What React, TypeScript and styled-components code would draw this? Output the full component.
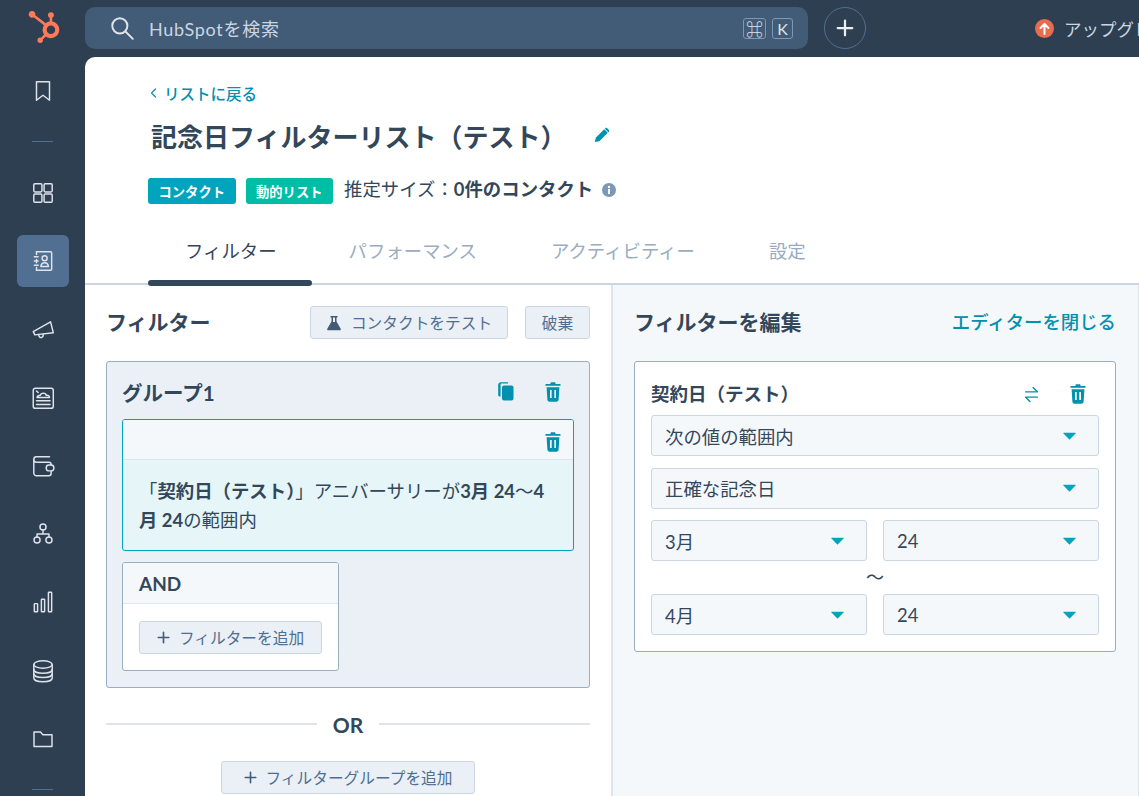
import styled, { createGlobalStyle } from "styled-components";
import { SiHubspot } from "react-icons/si";
import type { ReactNode } from "react";

const GlobalStyle = createGlobalStyle`
  html, body {
    margin: 0;
    padding: 0;
    height: 100%;
    overflow: hidden;
    background: #2e3f52;
  }
  body {
    font-family: Lato, "Noto Sans CJK JP", sans-serif;
    color: #33475b;
  }
  * {
    box-sizing: border-box;
  }
`;

const Line = ({ size = 26, children }: { size?: number; children: ReactNode }) => (
  <svg width={size} height={size} viewBox="0 0 24 24" fill="none" stroke="currentColor" strokeWidth="1.35" strokeLinecap="round" strokeLinejoin="round">
    {children}
  </svg>
);

const BookmarkIcon = () => (
  <Line>
    <path d="M6 3.500h12v17l-6-4.600-6 4.600z" />
  </Line>
);

const GridIcon = () => (
  <Line>
    <rect x="3.500" y="3.500" width="7.500" height="7.500" rx="1" />
    <rect x="13" y="3.500" width="7.500" height="7.500" rx="1" />
    <rect x="3.500" y="13" width="7.500" height="7.500" rx="1" />
    <rect x="13" y="13" width="7.500" height="7.500" rx="1" />
  </Line>
);

const ContactsIcon = () => (
  <Line>
    <path d="M6 3.500h13a1 1 0 0 1 1 1v15a1 1 0 0 1-1 1H6" />
    <path d="M6 3.500v2.500M6 10.500v3M6 18v2.500M4 8h3.500M4 12h3.500M4 16h3.500" />
    <circle cx="13.500" cy="9.500" r="2.300" />
    <path d="M10 17c.4-2.300 1.800-3.300 3.500-3.300s3.100 1 3.500 3.300z" />
  </Line>
);

const MegaphoneIcon = () => (
  <Line>
    <path d="M3 13.500 19 4.500l2.500 10-17 2z" />
    <path d="M8 16.200c.2 2 1.200 3 2.500 2.800s1.800-1.300 1.700-3" />
  </Line>
);

const ReportIcon = () => (
  <Line>
    <rect x="3" y="3" width="18.500" height="18.500" rx="2" />
    <path d="M6 5.500l1.500 1.500" />
    <path d="M6.500 11.500c.5-2 2-2 3-2 .6-2.500 5-2.500 5.500 0 1.500-.3 3 .5 3 2z" />
    <path d="M6 14.500h12.500M6 18h12.500" />
  </Line>
);

const WalletIcon = () => (
  <Line>
    <path d="M18 3.500H6a2.500 2.500 0 0 0-2.500 2.500v12.500A2.500 2.500 0 0 0 6 21h11.500a2 2 0 0 0 2-2v-2" />
    <path d="M3.500 6.500c0 1.200 1 2 2.500 2h11.500a2 2 0 0 1 2 2V11" />
    <rect x="15" y="11" width="7" height="5.500" rx="2.500" />
  </Line>
);

const NetworkIcon = () => (
  <Line>
    <circle cx="12" cy="5.500" r="2.800" />
    <circle cx="6.500" cy="17.500" r="2.800" />
    <circle cx="17.500" cy="17.500" r="2.800" />
    <path d="M12 8.300v3.700M6.500 14.700V12h11v2.700" />
  </Line>
);

const BarsIcon = () => (
  <Line>
    <rect x="4" y="13.500" width="3" height="7.500" rx=".5" />
    <rect x="10.500" y="9.500" width="3" height="11.500" rx=".5" />
    <rect x="17" y="3" width="3" height="18" rx=".5" />
  </Line>
);

const DatabaseIcon = () => (
  <Line>
    <ellipse cx="12" cy="6" rx="8.500" ry="3.500" />
    <path d="M3.500 6v12.500C3.500 20.500 7 22 12 22s8.500-1.500 8.500-3.500V6" />
    <path d="M3.500 10.500c0 2 3.500 3.500 8.500 3.500s8.500-1.500 8.500-3.500M3.500 14.500c0 2 3.500 3.500 8.500 3.500s8.500-1.500 8.500-3.500" />
  </Line>
);

const FolderIcon = () => (
  <Line>
    <path d="M3.700 5.500h6l2 2.500h8.600v11H3.700z" />
  </Line>
);

const SearchIcon = () => (
  <Line>
    <circle cx="10" cy="10" r="7" />
    <path d="M15.200 15.200 22 22" />
  </Line>
);

const PlusIcon = ({ size = 16 }: { size?: number }) => (
  <svg width={size} height={size} viewBox="0 0 16 16" fill="none" stroke="currentColor" strokeWidth="2" strokeLinecap="round">
    <path d="M8 1.500v13M1.500 8h13" />
  </svg>
);

const TrashIcon = () => (
  <svg width="16" height="20" viewBox="0 0 16 20" fill="currentColor">
    <path d="M5.500 1.200C5.500.6 6 .2 6.600.2h2.800c.6 0 1.100.4 1.100 1V2h4.300c.5 0 .9.400.9.900s-.4.900-.9.900H1.200C.7 3.800.3 3.400.3 2.900S.7 2 1.200 2h4.300z" />
    <path fillRule="evenodd" d="M1.600 5.200h12.800l-.8 12.600c-.1 1.100-1 1.900-2 1.900H4.400c-1 0-1.900-.8-2-1.900zM5 8v8h1.700V8zm4.300 0v8H11V8z" />
  </svg>
);

const CopyIcon = () => (
  <svg width="16" height="19" viewBox="0 0 16 19" fill="currentColor">
    <path d="M2.600 14.500V2.500c0-.6.400-1 1-1h6.500V.2H3C1.300.2.200 1.300.2 3v10c0 1 .9 1.500 2.400 1.500z" />
    <rect x="4" y="3.500" width="11.500" height="15" rx="2" />
  </svg>
);

const FlaskIcon = () => (
  <svg width="16" height="16" viewBox="0 0 16 16" fill="currentColor">
    <path fillRule="evenodd" d="M4.500 1h7v1.500h-1v4l4.200 7.200c.4.800 0 1.500-.9 1.500H2.200c-.9 0-1.300-.7-.9-1.500l4.200-7.200v-4h-1zM7 2.500v4.500h2V2.500z" />
  </svg>
);

const PencilIcon = () => (
  <svg width="16" height="16" viewBox="0 0 18 18" fill="currentColor">
    <path d="M1 17l1-5L11.500 2.500l4 4L6 16z" />
    <path d="M12.800 1.300c.6-.6 1.400-.6 2 0l2 2c.6.6.6 1.400 0 2l-.6.600-4-4z" />
  </svg>
);

const InfoIcon = () => (
  <svg width="14" height="14" viewBox="0 0 14 14">
    <circle cx="7" cy="7" r="7" fill="#7c98b6" />
    <rect x="6" y="6" width="2" height="5" fill="#fff" />
    <circle cx="7" cy="4" r="1.200" fill="#fff" />
  </svg>
);

const SwapIcon = () => (
  <svg width="15" height="17" viewBox="0 0 14 16" fill="none" stroke="currentColor" strokeWidth="1.300" strokeLinecap="round" strokeLinejoin="round">
    <path d="M1.500 5.500h11M8.500 1.500l4 4" />
    <path d="M12.500 10.500h-11M5.500 14.500l-4-4" />
  </svg>
);

const Caret = () => (
  <svg width="13" height="8" viewBox="0 0 14 8" fill="currentColor">
    <path d="M1 .5h12c.6 0 .8.500.5.900L7.500 7.500c-.3.300-.7.300-1 0L.5 1.400C.2 1 .4.500 1 .5z" />
  </svg>
);

const BackChevron = () => (
  <svg width="7" height="10" viewBox="0 0 7 10" fill="none" stroke="currentColor" strokeWidth="1.200" strokeLinecap="round" strokeLinejoin="round">
    <path d="M5.500 1 1.500 5l4 4" />
  </svg>
);

const UpgradeIcon = () => (
  <svg width="19" height="19" viewBox="0 0 19 19">
    <circle cx="9.500" cy="9.500" r="9.500" fill="#e66e50" />
    <path d="M9.500 15V5M5.500 9l4-4 4 4" fill="none" stroke="#fff" strokeWidth="2" strokeLinecap="round" strokeLinejoin="round" />
  </svg>
);

const navTop = [{ icon: <BookmarkIcon /> }];
const navMain = [
  { icon: <GridIcon /> },
  { icon: <ContactsIcon />, active: true },
  { icon: <MegaphoneIcon /> },
  { icon: <ReportIcon /> },
  { icon: <WalletIcon /> },
  { icon: <NetworkIcon /> },
  { icon: <BarsIcon /> },
  { icon: <DatabaseIcon /> },
  { icon: <FolderIcon /> },
];

const tabs = ["フィルター", "パフォーマンス", "アクティビティー", "設定"];

export default function App() {
  return (
    <>
      <GlobalStyle />
      <Shell>
        <LogoCell>
          <SiHubspot size={32} color="#ff7a59" />
        </LogoCell>

        <TopBar>
          <SearchBox>
            <SearchIcon />
            <SearchText>HubSpotを検索</SearchText>
            <Kbd $wide>⌘</Kbd>
            <Kbd>K</Kbd>
          </SearchBox>
          <RoundButton>
            <PlusIcon size={18} />
          </RoundButton>
          <Upgrade>
            <UpgradeIcon />
            アップグレード
          </Upgrade>
        </TopBar>

        <SideNav>
          {navTop.map((item, i) => (
            <NavItem key={i}>{item.icon}</NavItem>
          ))}
          <NavDivider />
          {navMain.map((item, i) => (
            <NavItem key={i}>
              <NavIcon $active={item.active}>{item.icon}</NavIcon>
            </NavItem>
          ))}
          <NavDivider />
        </SideNav>

        <Content>
          <Header>
            <BackLink>
              <BackChevron />
              リストに戻る
            </BackLink>
            <TitleRow>
              <Title>記念日フィルターリスト（テスト）</Title>
              <TealIcon>
                <PencilIcon />
              </TealIcon>
            </TitleRow>
            <MetaRow>
              <Tag $color="#00a4bd">コンタクト</Tag>
              <Tag $color="#00bda5">動的リスト</Tag>
              <Estimate>
                推定サイズ：<b>0件のコンタクト</b>
              </Estimate>
              <InfoMark>
                <InfoIcon />
              </InfoMark>
            </MetaRow>
            <TabRow>
              {tabs.map((tab, i) => (
                <Tab key={tab} $active={i === 0}>
                  {tab}
                </Tab>
              ))}
            </TabRow>
          </Header>

          <Columns>
            <LeftPane>
              <PaneHead>
                <PaneTitle>フィルター</PaneTitle>
                <HeadActions>
                  <GhostButton $width={198}>
                    <FlaskIcon />
                    コンタクトをテスト
                  </GhostButton>
                  <GhostButton $width={65}>破棄</GhostButton>
                </HeadActions>
              </PaneHead>

              <Group>
                <GroupHead>
                  <GroupTitle>グループ1</GroupTitle>
                  <IconActions>
                    <TealIcon>
                      <CopyIcon />
                    </TealIcon>
                    <TealIcon>
                      <TrashIcon />
                    </TealIcon>
                  </IconActions>
                </GroupHead>

                <FilterCard>
                  <FilterCardHead>
                    <TealIcon>
                      <TrashIcon />
                    </TealIcon>
                  </FilterCardHead>
                  <FilterCardBody>
                    「<b>契約日（テスト）</b>」アニバーサリーが<b>3月 24</b>〜<b>4月 24</b>の範囲内
                  </FilterCardBody>
                </FilterCard>

                <AndCard>
                  <AndHead>AND</AndHead>
                  <AndBody>
                    <GhostButton $width={183}>
                      <PlusIcon size={13} />
                      フィルターを追加
                    </GhostButton>
                  </AndBody>
                </AndCard>
              </Group>

              <OrRow>OR</OrRow>

              <AddGroupRow>
                <GhostButton $width={254}>
                  <PlusIcon size={13} />
                  フィルターグループを追加
                </GhostButton>
              </AddGroupRow>
            </LeftPane>

            <RightPane>
              <PaneHead>
                <PaneTitle>フィルターを編集</PaneTitle>
                <CloseLink>エディターを閉じる</CloseLink>
              </PaneHead>

              <EditCard>
                <EditHead>
                  <EditTitle>契約日（テスト）</EditTitle>
                  <IconActions>
                    <TealIcon>
                      <SwapIcon />
                    </TealIcon>
                    <TealIcon>
                      <TrashIcon />
                    </TealIcon>
                  </IconActions>
                </EditHead>
                <FieldStack>
                  <Select>
                    次の値の範囲内
                    <Caret />
                  </Select>
                  <Select>
                    正確な記念日
                    <Caret />
                  </Select>
                  <DateRow>
                    <Select>
                      3月
                      <Caret />
                    </Select>
                    <Select>
                      24
                      <Caret />
                    </Select>
                  </DateRow>
                </FieldStack>
                <Tilde>〜</Tilde>
                <DateRow>
                  <Select>
                    4月
                    <Caret />
                  </Select>
                  <Select>
                    24
                    <Caret />
                  </Select>
                </DateRow>
              </EditCard>
            </RightPane>
          </Columns>
        </Content>
      </Shell>
    </>
  );
}

const Shell = styled.div`
  display: grid;
  grid-template-columns: 85px 1fr;
  grid-template-rows: 57px 1fr;
  width: 100%;
  height: 100vh;
  overflow: hidden;
  background: #2e3f52;
`;

const LogoCell = styled.div`
  display: flex;
  align-items: center;
  justify-content: center;
  padding: 0 0 3px 3px;
`;

const TopBar = styled.div`
  display: flex;
  align-items: center;
  gap: 16px;
  padding-bottom: 1px;
  min-width: 0;
  overflow: hidden;
`;

const SearchBox = styled.div`
  display: flex;
  flex: none;
  align-items: center;
  width: 723px;
  height: 42px;
  padding: 0 15px 0 24px;
  background: #425b76;
  border-radius: 10px;
  color: #dfe3eb;

  svg {
    stroke-width: 1.8;
  }
`;

const SearchText = styled.span`
  flex: 1;
  margin-left: 14px;
  font-size: 18px;
  letter-spacing: 0.7px;
  color: #cbd6e2;
`;

const Kbd = styled.span<{ $wide?: boolean }>`
  display: flex;
  align-items: center;
  justify-content: center;
  width: ${(props) => (props.$wide ? "23px" : "21px")};
  height: 21px;
  margin-left: ${(props) => (props.$wide ? "0" : "6px")};
  border: 1px solid #7c98b6;
  border-radius: 3px;
  font-size: ${(props) => (props.$wide ? "17px" : "16px")};
  color: #dfe3eb;
`;

const RoundButton = styled.div`
  display: flex;
  flex: none;
  align-items: center;
  justify-content: center;
  width: 42px;
  height: 42px;
  border: 1px solid #516f90;
  border-radius: 50%;
  color: #eaf0f6;
`;

const Upgrade = styled.div`
  display: flex;
  flex: none;
  align-items: center;
  gap: 10px;
  margin-left: 153px;
  font-size: 17.500px;
  color: #cbd6e2;
  white-space: nowrap;
`;

const SideNav = styled.nav`
  display: flex;
  flex-direction: column;
  align-items: center;
  overflow: hidden;
`;

const NavItem = styled.div`
  display: flex;
  flex: none;
  align-items: center;
  justify-content: center;
  width: 100%;
  height: 68.200px;
  color: #dfe3eb;
`;

const NavIcon = styled.div<{ $active?: boolean }>`
  display: flex;
  align-items: center;
  justify-content: center;
  width: 52px;
  height: 52px;
  border-radius: 6px;
  background: ${(props) => (props.$active ? "#516f90" : "transparent")};
`;

const NavDivider = styled.div`
  flex: none;
  width: 21px;
  height: 1px;
  margin: 16px 0 17px;
  background: #516f90;
`;

const Content = styled.main`
  display: flex;
  flex-direction: column;
  min-width: 0;
  min-height: 0;
  overflow: hidden;
  background: #fff;
  border-top-left-radius: 10px;
`;

const Header = styled.header`
  flex: none;
  padding: 25px 0 0 63px;
  border-bottom: 2px solid #cbd6e2;
`;

const BackLink = styled.a`
  display: flex;
  align-items: center;
  gap: 7px;
  height: 22px;
  margin-left: 2px;
  font-size: 15.500px;
  font-weight: 500;
  color: #0091ae;
`;

const TitleRow = styled.div`
  display: flex;
  align-items: center;
  gap: 28px;
  margin: 13px 0 0 3px;
  height: 36px;
`;

const Title = styled.h1`
  margin: 0;
  font-size: 26px;
  font-weight: 600;
  color: #33475b;
  white-space: nowrap;
`;

const TealIcon = styled.span`
  display: inline-flex;
  align-items: center;
  justify-content: center;
  color: #0091ae;
`;

const MetaRow = styled.div`
  display: flex;
  align-items: center;
  height: 26px;
  margin-top: 25px;
`;

const Tag = styled.span<{ $color: string }>`
  display: flex;
  align-items: center;
  justify-content: center;
  width: 87.500px;
  height: 26px;
  margin-right: 10px;
  border-radius: 3px;
  background: ${(props) => props.$color};
  color: #fff;
  font-size: 13.300px;
  font-weight: 700;
`;

const Estimate = styled.span`
  margin: 0 9px 6px 1px;
  font-size: 18.400px;
  color: #33475b;

  b {
    font-weight: 700;
  }
`;

const InfoMark = styled.span`
  display: flex;
  margin-bottom: 3px;
`;

const TabRow = styled.div`
  display: flex;
  margin-top: 26px;
  height: 55px;
  margin-bottom: -2px;
`;

const Tab = styled.div<{ $active: boolean }>`
  position: relative;
  padding: 7px 37px 0;
  font-size: 18.400px;
  color: ${(props) => (props.$active ? "#33475b" : "#99acc2")};

  &:first-child {
    padding: 7px 35px 0 37px;
  }

  &::after {
    content: "";
    display: ${(props) => (props.$active ? "block" : "none")};
    position: absolute;
    left: 0;
    right: 0;
    bottom: -1px;
    height: 6px;
    border-radius: 3px;
    background: #33475b;
  }
`;

const Columns = styled.div`
  display: grid;
  flex: 1;
  grid-template-columns: 528px 1fr;
  min-height: 0;
`;

const LeftPane = styled.section`
  padding: 21px 21px 0;
  border-right: 2px solid #dfe3eb;
`;

const RightPane = styled.section`
  padding: 21px 22px 0 21px;
  background: #f5f8fa;
  border-right: 1px solid #dfe3eb;
`;

const PaneHead = styled.div`
  display: flex;
  align-items: center;
  justify-content: space-between;
  height: 33px;
  margin-bottom: 22px;
`;

const PaneTitle = styled.h2`
  margin: 0 0 4px;
  font-size: 21px;
  font-weight: 700;
  color: #33475b;
`;

const HeadActions = styled.div`
  display: flex;
  gap: 17px;
`;

const GhostButton = styled.button<{ $width: number }>`
  display: flex;
  align-items: center;
  justify-content: center;
  gap: 9px;
  width: ${(props) => props.$width}px;
  height: 33px;
  padding: 0;
  background: #eaf0f6;
  border: 1px solid #cbd6e2;
  border-radius: 3px;
  font-family: inherit;
  font-size: 15.700px;
  color: #506e91;

  svg {
    color: #425b76;
  }
`;

const Group = styled.div`
  height: 327px;
  padding: 0 15px;
  background: #eaf0f6;
  border: 1px solid #99acc2;
  border-radius: 3px;
`;

const GroupHead = styled.div`
  display: flex;
  align-items: center;
  justify-content: space-between;
  height: 57px;
  padding: 2px 13px 0 0;
`;

const GroupTitle = styled.h3`
  margin: 0;
  font-size: 20.500px;
  font-weight: 700;
  color: #33475b;
`;

const IconActions = styled.div`
  display: flex;
  align-items: center;
  gap: 31px;
`;

const FilterCard = styled.div`
  overflow: hidden;
  background: #e5f5f8;
  border: 1px solid #00a4bd;
  border-radius: 3px;
`;

const FilterCardHead = styled.div`
  display: flex;
  align-items: center;
  justify-content: flex-end;
  height: 40px;
  padding: 4px 12px 0 0;
  background: #f5f8fa;
  border-bottom: 1px solid #dfe3eb;
`;

const FilterCardBody = styled.div`
  padding: 17px 16px 15px;
  font-size: 18.400px;
  line-height: 29px;
  color: #33475b;

  b {
    font-weight: 700;
  }
`;

const AndCard = styled.div`
  width: 217px;
  margin-top: 11px;
  overflow: hidden;
  background: #fff;
  border: 1px solid #99acc2;
  border-radius: 3px;
`;

const AndHead = styled.div`
  display: flex;
  align-items: center;
  height: 41px;
  padding-left: 16px;
  background: #f5f8fa;
  border-bottom: 1px solid #dfe3eb;
  font-size: 19px;
  font-weight: 700;
  color: #33475b;
`;

const AndBody = styled.div`
  padding: 17px 16px 16px;
`;

const OrRow = styled.div`
  display: flex;
  align-items: center;
  gap: 16px;
  margin-top: 23px;
  height: 26px;
  font-size: 21px;
  font-weight: 700;
  color: #33475b;

  &::before,
  &::after {
    content: "";
    flex: 1;
    height: 2px;
    background: #dfe3eb;
  }
`;

const AddGroupRow = styled.div`
  display: flex;
  justify-content: center;
  margin-top: 24px;
`;

const CloseLink = styled.a`
  margin-bottom: 4px;
  font-size: 18.400px;
  font-weight: 500;
  color: #0091ae;
`;

const EditCard = styled.div`
  height: 291px;
  padding: 0 16px;
  background: #fff;
  border: 1px solid #99acc2;
  border-radius: 3px;
`;

const EditHead = styled.div`
  display: flex;
  align-items: center;
  justify-content: space-between;
  height: 53px;
  padding: 11px 13px 0 0;
`;

const EditTitle = styled.h3`
  margin: 0 0 2px;
  font-size: 18.500px;
  font-weight: 700;
  color: #33475b;
`;

const FieldStack = styled.div`
  display: flex;
  flex-direction: column;
  gap: 11.500px;
`;

const DateRow = styled.div`
  display: grid;
  grid-template-columns: 1fr 1fr;
  gap: 16px;
`;

const Select = styled.div`
  display: flex;
  align-items: center;
  justify-content: space-between;
  height: 41px;
  padding: 0 22px 0 13px;
  background: #f5f8fa;
  border: 1px solid #cbd6e2;
  border-radius: 3px;
  font-size: 18.400px;
  color: #33475b;

  svg {
    color: #00a4bd;
  }
`;

const Tilde = styled.div`
  height: 33px;
  line-height: 33px;
  text-align: center;
  font-size: 18px;
  color: #33475b;
`;
